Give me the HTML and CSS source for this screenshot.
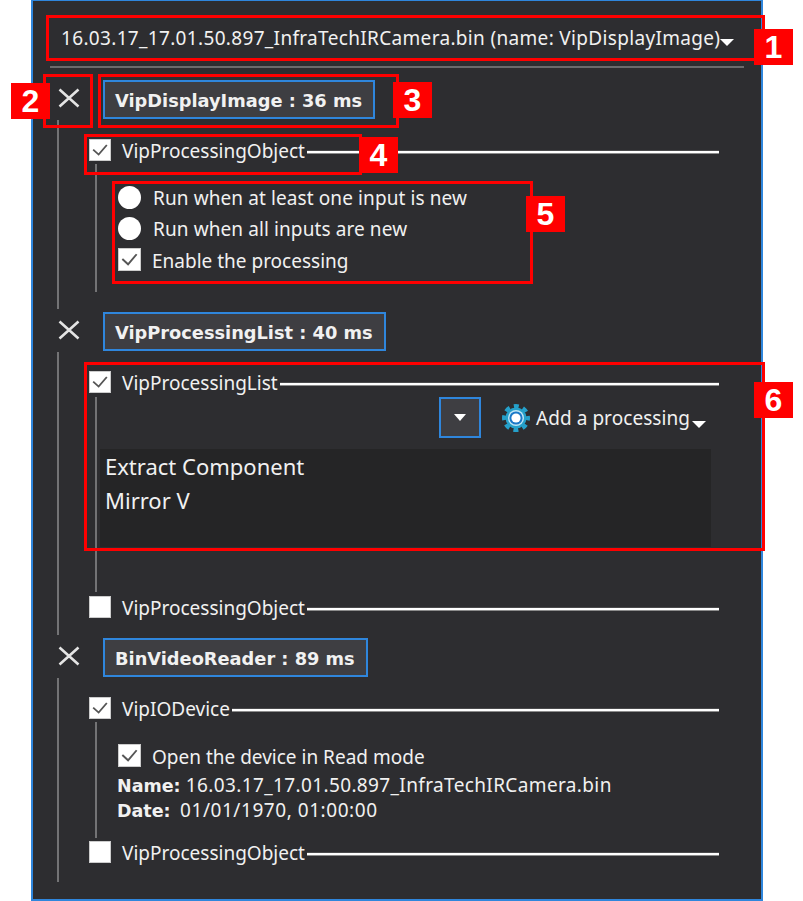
FILE: index.html
```html
<!DOCTYPE html>
<html lang="en">
<head>
    <meta charset="UTF-8">
    <title>Processing pipeline editor</title>
    <link rel="stylesheet" href="styles.css">
</head>
<body>
    <svg class="defs" width="0" height="0">
        <symbol id="tick" viewBox="0 0 22 22">
            <path d="M3.5 10.5L9.5 16L18.5 5.5" fill="none" stroke="#555" stroke-width="2"/>
        </symbol>
        <symbol id="cross" viewBox="0 0 24 24">
            <path d="M2.5 3.5L21.5 20.5M21.5 3.5L2.5 20.5" fill="none" stroke="#e4e4e4" stroke-width="2.6"/>
        </symbol>
    </svg>

    <div class="panel">
        <div class="file-row">
            <span class="file-name">16.03.17_17.01.50.897_InfraTechIRCamera.bin (name: VipDisplayImage)</span>
            <span class="caret"></span>
        </div>
        <div class="rule"></div>

        <div class="group first">
            <div class="group-head">
                <svg class="cross"><use href="#cross"/></svg>
                <div class="title-btn">VipDisplayImage : 36 ms</div>
            </div>
            <div class="group-body">
                <div class="section">
                    <div class="section-head">
                        <span class="check"><svg><use href="#tick"/></svg></span>
                        <span class="label">VipProcessingObject</span>
                        <span class="line"></span>
                    </div>
                    <div class="section-body options">
                        <div class="option"><span class="radio"></span><span class="opt-text">Run when at least one input is new</span></div>
                        <div class="option"><span class="radio"></span><span class="opt-text">Run when all inputs are new</span></div>
                        <div class="option"><span class="check big"><svg><use href="#tick"/></svg></span><span class="opt-text tight">Enable the processing</span></div>
                    </div>
                </div>
            </div>
        </div>

        <div class="group">
            <div class="group-head">
                <svg class="cross"><use href="#cross"/></svg>
                <div class="title-btn">VipProcessingList : 40 ms</div>
            </div>
            <div class="group-body">
                <div class="section">
                    <div class="section-head">
                        <span class="check"><svg><use href="#tick"/></svg></span>
                        <span class="label">VipProcessingList</span>
                        <span class="line"></span>
                    </div>
                    <div class="section-body list-body">
                        <div class="toolbar">
                            <div class="drop-btn"><span class="caret small"></span></div>
                            <svg class="gear" viewBox="0 0 28 28">
                                <circle cx="14" cy="14" r="12" fill="none" stroke="#25a0ca" stroke-width="4" stroke-dasharray="5 4.42" stroke-dashoffset="2.5"/>
                                <circle cx="14" cy="14" r="10.5" fill="#25a0ca"/>
                                <circle cx="14" cy="14" r="8" fill="#bfe6f5"/>
                                <circle cx="14" cy="14" r="6.6" fill="#1a78c8"/>
                                <circle cx="14" cy="14" r="4.6" fill="#fff"/>
                            </svg>
                            <span class="add-text">Add a processing</span>
                            <span class="caret low"></span>
                        </div>
                        <div class="proc-list">
                            <div>Extract Component</div>
                            <div>Mirror V</div>
                        </div>
                    </div>
                </div>
                <div class="section next">
                    <div class="section-head">
                        <span class="check"></span>
                        <span class="label">VipProcessingObject</span>
                        <span class="line"></span>
                    </div>
                </div>
            </div>
        </div>

        <div class="group">
            <div class="group-head">
                <svg class="cross"><use href="#cross"/></svg>
                <div class="title-btn">BinVideoReader : 89 ms</div>
            </div>
            <div class="group-body last">
                <div class="section">
                    <div class="section-head">
                        <span class="check"><svg><use href="#tick"/></svg></span>
                        <span class="label">VipIODevice</span>
                        <span class="line"></span>
                    </div>
                    <div class="section-body device">
                        <div class="option"><span class="check big"><svg><use href="#tick"/></svg></span><span class="opt-text tight">Open the device in Read mode</span></div>
                        <div class="info"><b>Name:</b> 16.03.17_17.01.50.897_InfraTechIRCamera.bin</div>
                        <div class="info date"><b>Date:</b> 01/01/1970, 01:00:00</div>
                    </div>
                </div>
                <div class="section next tight-top">
                    <div class="section-head">
                        <span class="check"></span>
                        <span class="label">VipProcessingObject</span>
                        <span class="line"></span>
                    </div>
                </div>
            </div>
        </div>
    </div>

    <!-- red callouts drawn over the screenshot -->
    <div class="box box1"></div>
    <div class="box box2"></div>
    <div class="box box3"></div>
    <div class="box box4"></div>
    <div class="box box5"></div>
    <div class="box box6"></div>
    <div class="badge badge1">1</div>
    <div class="badge badge2">2</div>
    <div class="badge badge3">3</div>
    <div class="badge badge4">4</div>
    <div class="badge badge5">5</div>
    <div class="badge badge6">6</div>
</body>
</html>
```

FILE: styles.css
```css
*{
    margin:0;
    padding:0;
    box-sizing:border-box;
}
html,body{
    height:901px;
    overflow:hidden;
}
body{
    position:relative;
    background:#fff;
    font-family:"Noto Sans","DejaVu Sans",sans-serif;
    font-size:19px;
    color:#f1f1f1;
}
.defs{
    position:absolute;
}
.panel{
    width:732px;
    height:901px;
    margin-left:31px;
    background:#2d2d30;
    border:2px solid #2f86dc;
    border-top-width:1px;
}

/* top row */
.file-row{
    display:flex;
    align-items:center;
    height:48px;
    margin-top:13px;
    padding-left:28px;
    white-space:nowrap;
}
.file-name{
    letter-spacing:.33px;
}
.caret{
    display:block;
    width:0;
    height:0;
    margin-top:8px;
    border-left:7.5px solid transparent;
    border-right:7.5px solid transparent;
    border-top:7.5px solid #fff;
}
.caret.small{
    margin:0;
    border-left-width:6px;
    border-right-width:6px;
    border-top-width:7px;
}
.caret.low{
    margin:14px 0 0 2px;
}
.rule{
    width:694px;
    height:2px;
    margin:4px 0 0 17px;
    background:#6a6a6c;
}

/* groups */
.group{
    margin:3px 42px 0 24px;
}
.group.first{
    margin-top:12px;
}
.group-head{
    display:flex;
    align-items:center;
    height:39px;
}
.cross{
    width:24px;
    height:24px;
    margin-right:22px;
    margin-top:-4px;
}
.title-btn{
    height:39px;
    line-height:37px;
    padding:0 11px 0 10px;
    background:#3e3e42;
    border:2px solid #2f86dc;
    font-family:"DejaVu Sans",sans-serif;
    font-size:17.8px;
    font-weight:bold;
    white-space:nowrap;
}
.group-body{
    margin-top:1px;
    padding:19px 0 17px 30px;
    border-left:2px solid #737375;
}
.group-body.last{
    padding-bottom:19px;
}
.section.next{
    margin-top:4px;
}
.section.tight-top{
    margin-top:3px;
}
.section-head{
    display:flex;
    align-items:center;
    height:22px;
}
.check{
    display:block;
    flex:none;
    width:22px;
    height:22px;
    background:#fff;
    border:1px solid #ccc;
}
.check svg{
    display:block;
    width:20px;
    height:20px;
}
.check.big{
    width:23px;
    height:23px;
}
.check.big svg{
    width:21px;
    height:21px;
}
.label{
    margin:2px 0 0 11px;
    white-space:nowrap;
}
.line{
    flex:1;
    height:2px;
    margin:4px 0 0 2px;
    background:#fff;
    box-shadow:0 1px 0 #8c8c8c,0 -1px 0 #4a4a4c;
}

/* bodies hanging off a section */
.section-body{
    margin:3px 0 0 6px;
    border-left:2px solid #737375;
}
.options{
    display:flex;
    flex-direction:column;
    gap:8px;
    padding:22px 0 21px 21px;
}
.option{
    display:flex;
    align-items:center;
    height:23px;
}
.radio{
    flex:none;
    width:23px;
    height:23px;
    border-radius:50%;
    background:#fff;
}
.opt-text{
    margin-left:12px;
    letter-spacing:.1px;
    white-space:nowrap;
}
.opt-text.tight{
    margin:2px 0 0 11px;
    letter-spacing:0;
}
.list-body{
    margin-top:4px;
    padding:0 8px 45px 3px;
}
.toolbar{
    display:flex;
    align-items:center;
    justify-content:flex-end;
    height:41px;
    padding-right:5px;
}
.drop-btn{
    display:flex;
    align-items:center;
    justify-content:center;
    width:42px;
    height:41px;
    margin-right:21px;
    background:#3e3e42;
    border:2px solid #2f86dc;
}
.gear{
    width:28px;
    height:28px;
    margin-right:6px;
}
.add-text{
    letter-spacing:.06px;
    white-space:nowrap;
}
.proc-list{
    height:98px;
    margin-top:12px;
    padding:0 5px;
    background:#252526;
    font-size:22px;
    line-height:34px;
}
.proc-list div:first-child{
    margin-top:-1px;
}
.device{
    padding:22px 0 15px 21px;
}
.info{
    height:25px;
    margin-left:-1px;
    letter-spacing:.37px;
    line-height:25px;
    white-space:nowrap;
}
.info b{
    font-family:"DejaVu Sans",sans-serif;
    font-size:17.5px;
    letter-spacing:0;
}
.info.date{
    letter-spacing:.55px;
}
.info.date b{
    margin-right:4px;
}
.device .option{
    margin-bottom:6px;
}

/* callouts */
.box{
    position:absolute;
    border:3px solid #f00;
}
.box1{ left:46px; top:15px; width:719px; height:46px; }
.box2{ left:43px; top:74px; width:50px; height:54px; }
.box3{ left:98px; top:74px; width:301px; height:54px; }
.box4{ left:84px; top:134px; width:278px; height:41px; }
.box5{ left:112px; top:181px; width:421px; height:103px; }
.box6{ left:84px; top:362px; width:681px; height:189px; }
.badge{
    position:absolute;
    width:39px;
    height:36px;
    background:#f00;
    color:#fff;
    font-family:"Liberation Sans",Arial,sans-serif;
    font-size:32px;
    font-weight:bold;
    line-height:36px;
    text-align:center;
}
.badge1{ left:754px; top:29px; }
.badge2{ left:11px; top:83px; }
.badge3{ left:393px; top:82px; }
.badge4{ left:359px; top:137px; }
.badge5{ left:526px; top:196px; }
.badge6{ left:754px; top:382px; }
```
